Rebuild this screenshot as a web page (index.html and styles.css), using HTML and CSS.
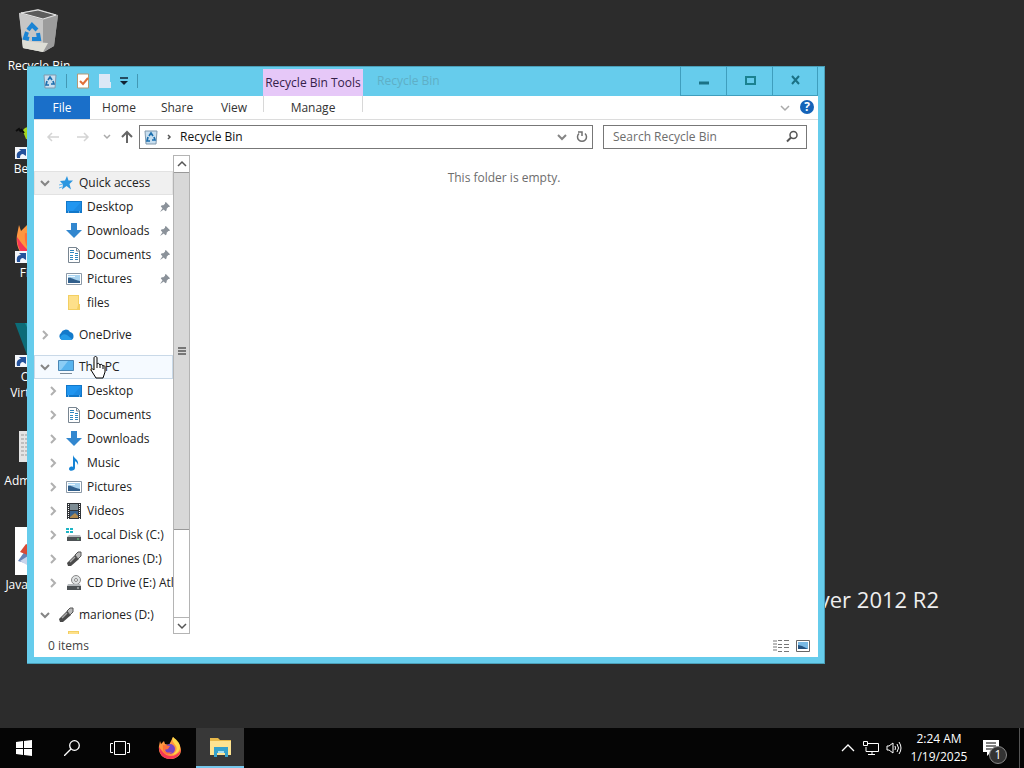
FILE: index.html
```html
<!DOCTYPE html>
<html lang="en">
<head>
  <meta charset="UTF-8">
  <meta name="viewport" content="width=device-width, initial-scale=1.0">
  <title>Recycle Bin</title>
  <link rel="stylesheet" href="styles.css">
</head>
<body>
  <!-- shared icons -->
  <svg class="sprite" aria-hidden="true">
    <symbol id="right" viewBox="0 0 14 14"><path d="M5 3l4 4-4 4" fill="none" stroke="#b0b0b0" stroke-width="2"/></symbol>
    <symbol id="down" viewBox="0 0 14 14"><path d="M3 5l4 4 4-4" fill="none" stroke="#858585" stroke-width="2"/></symbol>
    <symbol id="thin-down" viewBox="0 0 14 14"><path d="M3 5l4 4 4-4" fill="none" stroke="currentColor" stroke-width="1.5"/></symbol>
    <symbol id="thin-up" viewBox="0 0 14 14"><path d="M3 9l4-4 4 4" fill="none" stroke="currentColor" stroke-width="1.5"/></symbol>
    <symbol id="bin" viewBox="0 0 16 16">
      <path d="M2 2h12l-1 13H3z" fill="#c8dff0" stroke="#8199ad"/>
      <path d="M6 7l2-3 2 3M11 8l1 3H9M7 12H4l1-4" fill="none" stroke="#1c6fae" stroke-width="1.7"/>
    </symbol>
    <symbol id="star" viewBox="0 0 16 16"><path d="M9 1l1.500 4.500H15L11.500 9l1.500 5.500L8.500 11 4 14.500l1-5L2 6l5-.5z" fill="#2b96e0"/><path d="M1 10l4-1M1 13l3-1" stroke="#6bb8ee"/></symbol>
    <symbol id="desktop" viewBox="0 0 16 16"><path d="M0 2h16v12H0z" fill="#1177c9"/><path d="M1 3h14v9H1z" fill="#2196f0"/><path d="M15 3v9H7z" fill="#1c8be4"/><path d="M2 13h1M13 13h1" stroke="#cfe7fa"/></symbol>
    <symbol id="download" viewBox="0 0 16 16"><path d="M5 0h6v7h5l-8 8-8-8h5z" fill="#3287cf"/></symbol>
    <symbol id="document" viewBox="0 0 16 16"><path d="M2.500.5h8l3 3v12h-11z" fill="#fff" stroke="#788591"/><path d="M4 3.500h4M4 5.500h4M9 6.500h3M4 8.500h3M9 8.500h3M4 10.500h3M9 10.500h3M4 12.500h3M9 12.500h3" stroke="#2f86c0"/><path d="M10.500 1v3h3" fill="none" stroke="#788591"/></symbol>
    <symbol id="picture" viewBox="0 0 16 16"><path d="M.5 2.500h15v11H.5z" fill="#fff" stroke="#8b99a7"/><path d="M2 4h12v8H2z" fill="#a9d3ef"/><path d="M2 7c4-1 5 2 12 3v2H2z" fill="#315f8c"/><path d="M2 5h7v1H2z" fill="#eef8ff"/></symbol>
    <symbol id="folder" viewBox="0 0 16 16"><path d="M2 0h11v9h1v6H2z" fill="#f3cf62"/><path d="M3 1h9v9l-1 4H3z" fill="#fde08a"/></symbol>
    <symbol id="cloud" viewBox="0 0 16 16"><path d="M4 13a4 4 0 0 1-1-7 5 5 0 0 1 9-1 4.200 4.200 0 0 1 1 8z" fill="#127acb"/><path d="M2 11c2-5 5-4 7-3l5 4-1 1H4z" fill="#249be8"/></symbol>
    <symbol id="pc" viewBox="0 0 16 16"><path d="M.5 1.500h15v10H.5z" fill="#58b4ee" stroke="#4a86b4"/><path d="M1 2h9L3 11H1z" fill="#8bcdf5"/><path d="M2 14h12v1H2z" fill="#7c8c99"/></symbol>
    <symbol id="music" viewBox="0 0 16 16"><path d="M7 0c1 4 6 4 5 10-1-3-2-3-3-4v7c0 3-6 4-6 1 0-2 2-3 4-2z" fill="#1684d6"/></symbol>
    <symbol id="video" viewBox="0 0 16 16"><path d="M1 0h14v16H1z" fill="#303337"/><path d="M4 1h8v6H4z" fill="#7d8c94"/><path d="M4 8h8v7H4z" fill="#39638e"/><path d="M4 14l5-4 3 3v2H4z" fill="#b28a4d"/><path d="M2.500 1v15M13.500 1v15" stroke="#fff" stroke-dasharray="1 1"/></symbol>
    <symbol id="disk" viewBox="0 0 16 16"><path d="M0 1h3v2H0zM4 1h3v2H4zM0 4h3v2H0zM4 4h3v2H4z" fill="#1db5c5"/><path d="M3 8h11l1 2H1z" fill="#b5b9bc"/><path d="M1 10h14v4H1z" fill="#4d5255"/><path d="M11 12h2" stroke="#72e286"/></symbol>
    <symbol id="usb" viewBox="0 0 16 16"><path d="M1 12L9 4l4 4-8 7H2z" fill="#4a4a4a"/><path d="M9 4l3-3h3v4l-3 3z" fill="#b9b9b9" stroke="#555"/><path d="M4 11l5-5" stroke="#aaa" stroke-width="1.500"/></symbol>
    <symbol id="cd" viewBox="0 0 16 16"><circle cx="10" cy="5" r="4.500" fill="#e0e3e4" stroke="#888"/><circle cx="10" cy="5" r="1.500" fill="#fff" stroke="#888"/><path d="M2 9h12l1 2H1z" fill="#b5b9bc"/><path d="M1 11h14v4H1z" fill="#4d5255"/><path d="M11 13h2" stroke="#ddd"/></symbol>
    <symbol id="pin" viewBox="0 0 12 12"><path d="M7 0l5 5-1 1h-1L8 8v2L6.500 11 4.500 9 0 12l3-4.500-2-2L2 4h2l2-2V1z" fill="#8b929a"/></symbol>
    <symbol id="glass" viewBox="0 0 16 16"><circle cx="9.500" cy="6" r="3.500" fill="none" stroke="currentColor" stroke-width="1.500"/><path d="M7 8.500l-4 4" stroke="currentColor" stroke-width="2"/></symbol>
    <symbol id="fox" viewBox="0 0 24 24">
      <path d="M2 5l1 3 3-3 1 3 4 1 4-8 3 4 3 3c5 8 0 15-9 15C4 23 0 17 1 10z" fill="#ff9640"/>
      <path d="M1 11c0 7 4 12 11 12 6 0 10-4 11-9-3 4-6 6-10 6C7 20 4 15 1 11z" fill="#f63656"/>
      <path d="M15 1c-2 3 1 6 3 9 2 4-1 7-4 9 6-1 8-5 8-8 0-4-3-7-7-10z" fill="#ffd84b"/>
      <circle cx="12" cy="13" r="5" fill="#7544c6"/><path d="M5 9l7 1-2 3-4 1c2 3 5 3 8 2-4 5-10 2-9-7z" fill="#ff7139"/>
    </symbol>
    <symbol id="shortcut" viewBox="0 0 12 12"><path d="M0 0h12v12H0z" fill="#f4f6fa"/><path d="M2 11c-1-5 1-7 4-7L4 2h7v7L8 7c-2 0-3 1-3 4z" fill="#24529b"/></symbol>
  </svg>

  <main class="desktop">
    <a class="shortcut recycle" href="#">
      <svg class="big" viewBox="0 0 48 48">
        <path d="M4 5l19-4 20 6-4 31-10 6-21-4z" fill="#a8a8a8"/>
        <path d="M4 5l24 7v32L8 40z" fill="#c6c6c6"/><path d="M28 12l15-5-4 31-11 6z" fill="#9c9c9c"/>
        <path d="M6 5l17-3 18 5-13 4z" fill="#5c5c5c" stroke="#e6e6e6"/><path d="M7 32l12 2 14 1-5 9-20-4z" fill="#deded6"/>
        <path d="M13 22l4-5 5 5M23 25l1 6h-7M14 31l-4-1 2-6" fill="none" stroke="#1b84d4" stroke-width="4"/>
      </svg>
      <span>Recycle Bin</span>
    </a>
    <a class="shortcut bee" href="#">
      <svg class="big" viewBox="0 0 48 48"><path d="M7 20l3-3 5-2v14l-4-1-2-5z" fill="#a5d51f"/><path d="M1 20l3-2 2 3M6 18l3 4" fill="none" stroke="#0c0c0c" stroke-width="2"/></svg>
      <svg class="arrow"><use href="#shortcut"/></svg>
      <span>BeeWare</span>
    </a>
    <a class="shortcut firefox" href="#">
      <svg class="big"><use href="#fox"/></svg>
      <svg class="arrow"><use href="#shortcut"/></svg>
      <span>Firefox</span>
    </a>
    <a class="shortcut virtual" href="#">
      <svg class="big" viewBox="0 0 48 48"><path d="M0 4h14l10 30-12 2z" fill="#0c6c78"/><path d="M10 4h14v30z" fill="#15929b"/></svg>
      <svg class="arrow"><use href="#shortcut"/></svg>
      <span>Oracle<br>VirtualBox</span>
    </a>
    <a class="shortcut admin" href="#">
      <svg class="big" viewBox="0 0 48 48"><path d="M4 8h40v31H4z" fill="#e4e4e4"/><path d="M6 12h36M6 16h36M6 20h36M6 24h36M6 28h36M6 32h36" stroke="#999" stroke-dasharray="3 1"/></svg>
      <span>Admin Tools</span>
    </a>
    <a class="shortcut java" href="#">
      <svg class="big" viewBox="0 0 48 48"><path d="M0 0h48v48H0z" fill="#fff"/><path d="M3 34l7-10 14 4v12z" fill="#6482b8"/><path d="M5 25l6-8 9 4-2 9z" fill="#d94a35"/><path d="M5 34l8-5 5 5-6 4z" fill="#c9d5ec"/></svg>
      <span>Java Control</span>
    </a>
    <p class="wordmark">Windows Server 2012 R2</p>

    <section class="window">
      <header class="titlebar">
        <div class="quick">
          <svg class="ico"><use href="#bin"/></svg>
          <i class="sep"></i>
          <button aria-label="Properties"><svg class="ico" viewBox="0 0 16 16"><path d="M2.500 1h11v14h-11z" fill="#fff" stroke="#b49a76"/><path d="M5 8l3 3 5-6" fill="none" stroke="#e0703a" stroke-width="2"/></svg></button>
          <button aria-label="New folder"><svg class="ico" viewBox="0 0 16 16"><path d="M2 1h11v8h1v6H2z" fill="#dce8f6"/></svg></button>
          <button aria-label="Customize"><svg class="mini" viewBox="0 0 10 10"><path d="M1 2h8" stroke="#123" stroke-width="1.500"/><path d="M1 5h8L5 9z" fill="#123"/></svg></button>
          <i class="sep"></i>
        </div>
        <div class="context">Recycle Bin Tools</div>
        <h1>Recycle Bin</h1>
        <div class="controls">
          <button aria-label="Minimize"><svg viewBox="0 0 14 14"><path d="M2 9h10" stroke="#1b7286" stroke-width="3"/></svg></button>
          <button aria-label="Maximize"><svg viewBox="0 0 14 14"><path d="M3 3h9v7H3z" fill="none" stroke="#1b8290" stroke-width="2"/></svg></button>
          <button aria-label="Close"><svg viewBox="0 0 14 14"><path d="M4 2l7 8M11 2l-7 8" stroke="#1b7286" stroke-width="2"/></svg></button>
        </div>
      </header>

      <nav class="ribbon">
        <button class="file">File</button>
        <button>Home</button>
        <button>Share</button>
        <button class="view">View</button>
        <button class="manage">Manage</button>
        <span class="grow"></span>
        <button class="expand" aria-label="Expand ribbon"><svg><use href="#thin-down"/></svg></button>
        <button class="help" aria-label="Help">?</button>
      </nav>

      <div class="address">
        <button class="nav" aria-label="Back"><svg viewBox="0 0 14 14"><path d="M13 7H2M6 3L2 7l4 4" fill="none" stroke="#d4d4d4" stroke-width="1.500"/></svg></button>
        <button class="nav" aria-label="Forward"><svg viewBox="0 0 14 14"><path d="M1 7h11M8 3l4 4-4 4" fill="none" stroke="#d4d4d4" stroke-width="1.500"/></svg></button>
        <button class="recent" aria-label="Recent"><svg viewBox="0 0 10 10"><path d="M2 3l3 3 3-3" fill="none" stroke="#aaa" stroke-width="1.500"/></svg></button>
        <button class="nav" aria-label="Up"><svg viewBox="0 0 14 14"><path d="M7 13V2M2 7l5-5 5 5" fill="none" stroke="#666" stroke-width="2"/></svg></button>
        <div class="path">
          <svg class="ico"><use href="#bin"/></svg>
          <svg class="crumb" viewBox="0 0 10 10"><path d="M4 3l2 2-2 2" fill="none" stroke="#555" stroke-width="1.500"/></svg>
          <button class="here">Recycle Bin</button>
          <button aria-label="Previous locations"><svg><use href="#down"/></svg></button>
          <button aria-label="Refresh"><svg viewBox="0 0 14 14"><path d="M10 3.500a4.500 4.500 0 1 1-6 0M3 2h4v4" fill="none" stroke="#707070" stroke-width="1.500"/></svg></button>
        </div>
        <label class="search">
          <input type="text" placeholder="Search Recycle Bin" aria-label="Search Recycle Bin">
          <svg class="ico"><use href="#glass"/></svg>
        </label>
      </div>

      <div class="content">
        <ul class="tree">
          <li class="row selected"><svg class="tw"><use href="#down"/></svg><svg class="ico"><use href="#star"/></svg><a href="#">Quick access</a></li>
          <li class="row sub"><i class="tw"></i><svg class="ico"><use href="#desktop"/></svg><a href="#">Desktop</a><svg class="pin"><use href="#pin"/></svg></li>
          <li class="row sub"><i class="tw"></i><svg class="ico"><use href="#download"/></svg><a href="#">Downloads</a><svg class="pin"><use href="#pin"/></svg></li>
          <li class="row sub"><i class="tw"></i><svg class="ico"><use href="#document"/></svg><a href="#">Documents</a><svg class="pin"><use href="#pin"/></svg></li>
          <li class="row sub"><i class="tw"></i><svg class="ico"><use href="#picture"/></svg><a href="#">Pictures</a><svg class="pin"><use href="#pin"/></svg></li>
          <li class="row sub"><i class="tw"></i><svg class="ico"><use href="#folder"/></svg><a href="#">files</a></li>
          <li class="row group"><svg class="tw"><use href="#right"/></svg><svg class="ico"><use href="#cloud"/></svg><a href="#">OneDrive</a></li>
          <li class="row group hover"><svg class="tw"><use href="#down"/></svg><svg class="ico"><use href="#pc"/></svg><a href="#">This PC</a>
            <svg class="cursor" viewBox="0 0 16 24"><path d="M4 14V2c0-2 3-2 3 0v6c1-1 2-1 3 1 1-1 2-1 3 1 1-1 2 0 2 1v5l-2 6H6l-5-8c0-2 2-1 3 0zM7 8v4M10 9v3M13 10v3" fill="#fff" stroke="#000"/></svg>
          </li>
          <li class="row sub"><svg class="tw"><use href="#right"/></svg><svg class="ico"><use href="#desktop"/></svg><a href="#">Desktop</a></li>
          <li class="row sub"><svg class="tw"><use href="#right"/></svg><svg class="ico"><use href="#document"/></svg><a href="#">Documents</a></li>
          <li class="row sub"><svg class="tw"><use href="#right"/></svg><svg class="ico"><use href="#download"/></svg><a href="#">Downloads</a></li>
          <li class="row sub"><svg class="tw"><use href="#right"/></svg><svg class="ico"><use href="#music"/></svg><a href="#">Music</a></li>
          <li class="row sub"><svg class="tw"><use href="#right"/></svg><svg class="ico"><use href="#picture"/></svg><a href="#">Pictures</a></li>
          <li class="row sub"><svg class="tw"><use href="#right"/></svg><svg class="ico"><use href="#video"/></svg><a href="#">Videos</a></li>
          <li class="row sub"><svg class="tw"><use href="#right"/></svg><svg class="ico"><use href="#disk"/></svg><a href="#">Local Disk (C:)</a></li>
          <li class="row sub"><svg class="tw"><use href="#right"/></svg><svg class="ico"><use href="#usb"/></svg><a href="#">mariones (D:)</a></li>
          <li class="row sub"><svg class="tw"><use href="#right"/></svg><svg class="ico"><use href="#cd"/></svg><a href="#">CD Drive (E:) Atla</a></li>
          <li class="row group"><svg class="tw"><use href="#down"/></svg><svg class="ico"><use href="#usb"/></svg><a href="#">mariones (D:)</a></li>
          <li class="row sub"><i class="tw"></i><svg class="ico"><use href="#folder"/></svg></li>
        </ul>
        <div class="scrollbar">
          <button aria-label="Scroll up"><svg><use href="#thin-up"/></svg></button>
          <div class="thumb"><i class="grip"></i></div>
          <span class="grow"></span>
          <button aria-label="Scroll down"><svg><use href="#thin-down"/></svg></button>
        </div>
        <p class="empty">This folder is empty.</p>
      </div>

      <footer class="status">
        <span>0 items</span>
        <span class="grow"></span>
        <button aria-label="Details"><svg class="ico" viewBox="0 0 16 16"><path d="M1 2v12M3 2v12" stroke="#777" stroke-dasharray="2 1"/><path d="M5 2.500h4M11 2.500h5M5 6.500h4M11 6.500h5M5 9.500h4M11 9.500h5M5 13.500h4M11 13.500h5" stroke="#777"/></svg></button>
        <button aria-label="Large icons"><svg class="ico" viewBox="0 0 16 16"><path d="M1.500 2.500h13v11h-13z" fill="#fff" stroke="#666"/><path d="M3 4h10v7H3z" fill="#79b9e4"/><path d="M3 7l4 1 6 3H3z" fill="#235280"/></svg></button>
      </footer>
    </section>
  </main>

  <footer class="taskbar">
    <button aria-label="Start"><svg viewBox="0 0 16 16"><path d="M0 2l7-1v7H0zM8 1l8-1v8H8zM0 9h7v6l-7-1zM8 9h8v7l-8-1z" fill="#fff"/></svg></button>
    <button aria-label="Search"><svg viewBox="0 0 16 16"><circle cx="10.500" cy="5.500" r="4.800" fill="none" stroke="#fff" stroke-width="1.300"/><path d="M7 9l-7 7" stroke="#fff" stroke-width="1.300"/></svg></button>
    <button aria-label="Task view"><svg class="wide" viewBox="0 0 20 16"><path d="M4.500 1.500h11v13h-11zM3 3.500H.5v9H3M17 3.500h2.500v9H17" fill="none" stroke="#fff"/></svg></button>
    <button class="app" aria-label="Firefox"><svg class="large"><use href="#fox"/></svg></button>
    <button class="active" aria-label="File Explorer"><svg class="large" viewBox="0 0 24 24"><path d="M2 3h8l2 2h11v15H2z" fill="#e8b94a"/><path d="M2 6h21v14H2z" fill="#fde391"/><path d="M6 12h14v10h-3v-4H9v4H6z" fill="#35a1cc"/><path d="M10 16h6v2h-6z" fill="#a5ddf0"/></svg></button>
    <span class="grow"></span>
    <button class="tray" aria-label="Show hidden icons"><svg viewBox="0 0 16 16"><path d="M2 11l6-6 6 6" fill="none" stroke="#fff" stroke-width="1.300"/></svg></button>
    <button class="tray" aria-label="Network"><svg viewBox="0 0 16 16"><path d="M5 3.500h10.500v8H3V7M9 11v3M5 14.500h7M.5 1.500h4v4h-4z" fill="none" stroke="#fff"/></svg></button>
    <button class="tray" aria-label="Volume"><svg viewBox="0 0 16 16"><path d="M1 6h2l4-3v10l-4-3H1zM9 6q1 2 0 4M11 4q3 4 0 8M13 2q4 6 0 12" fill="none" stroke="#fff"/></svg></button>
    <button class="clock">2:24 AM<br>1/19/2025</button>
    <button class="notes" aria-label="Notifications"><svg viewBox="0 0 16 16"><path d="M0 0h16v12H8l-4 4v-4H0z" fill="#fff"/><path d="M3 3h10M3 6h10M3 9h7" stroke="#000"/></svg><b>1</b></button>
  </footer>
</body>
</html>
```
FILE: styles.css
```css
* {
  box-sizing: border-box;
}
body {
  margin: 0;
  height: 100vh;
  display: flex;
  flex-direction: column;
  overflow: hidden;
  background: #2c2c2c;
  font-family: "Open Sans", "Noto Sans", sans-serif;
  font-size: 12px;
  line-height: 16px;
  color: #222;
}
button {
  display: flex;
  align-items: center;
  justify-content: center;
  margin: 0;
  padding: 0;
  border: none;
  background: none;
  font: inherit;
  color: inherit;
}
a {
  color: inherit;
  text-decoration: none;
}
svg {
  width: 14px;
  height: 14px;
  flex: none;
}
.sprite {
  position: absolute;
  width: 0;
  height: 0;
}
.ico {
  width: 16px;
  height: 16px;
}
.grow {
  flex: 1;
}

/* desktop */
.desktop {
  flex: 1;
  position: relative;
}
.shortcut {
  position: absolute;
  left: 0;
  width: 78px;
  color: #fff;
  text-align: center;
  white-space: nowrap;
}
.shortcut span {
  display: block;
  margin-top: 2px;
}
.big {
  display: block;
  width: 48px;
  height: 48px;
  margin: 0 auto;
}
.arrow {
  position: absolute;
  left: 15px;
  top: 36px;
  width: 12px;
  height: 12px;
}
.recycle { top: 8px; }
.bee { top: 111px; }
.firefox { top: 215px; }
.virtual { top: 319px; }
.admin { top: 423px; }
.java { top: 527px; }
.wordmark {
  position: absolute;
  right: 85px;
  bottom: 113px;
  margin: 0;
  font-size: 22px;
  line-height: 32px;
  color: #eee;
}

/* window */
.window {
  position: absolute;
  left: 27px;
  top: 66px;
  right: 199px;
  bottom: 64px;
  display: flex;
  flex-direction: column;
  padding: 0 7px 7px;
  background: #66ccec;
  box-shadow: inset 0 1px #4a9fb8, inset -1px -1px #4a9fb8;
}
.titlebar {
  display: flex;
  height: 30px;
}
.quick {
  display: flex;
  align-items: center;
  gap: 6px;
  width: 229px;
  padding-left: 8px;
}
.mini {
  width: 10px;
  height: 10px;
}
.sep {
  width: 1px;
  height: 14px;
  margin: 0 2px;
  background: #4398b4;
}
.context {
  width: 100px;
  margin-top: 3px;
  padding-top: 6px;
  background: #e6c8f8;
  color: #35204a;
  text-align: center;
  white-space: nowrap;
}
.titlebar h1 {
  flex: 1;
  margin: 0;
  padding: 7px 14px;
  font-size: 12px;
  font-weight: normal;
  color: #5fafc6;
}
.controls {
  display: flex;
}
.controls button {
  width: 46px;
  border-left: 1px solid #3f9ebd;
  border-bottom: 1px solid #3f9ebd;
}
.controls button:last-child {
  border-right: 1px solid #3f9ebd;
}
.ribbon {
  display: flex;
  height: 24px;
  padding-right: 4px;
  background: #fff;
  border-bottom: 1px solid #dcdcdc;
}
.ribbon button {
  width: 58px;
  color: #333;
}
.ribbon .file {
  width: 56px;
  background: #1a6fc9;
  color: #fff;
}
.ribbon .view {
  width: 56px;
}
.ribbon .manage {
  width: 100px;
  height: 16px;
  margin-left: 1px;
  padding-top: 8px;
  border: solid #d8d8d8;
  border-width: 0 1px;
}
.ribbon .expand {
  width: 18px;
  margin-right: 6px;
  color: #aaa;
}
.ribbon .help {
  width: 14px;
  height: 14px;
  margin-top: 4px;
  border-radius: 50%;
  background: #1463b8;
  color: #fff;
  font-weight: bold;
}
.address {
  display: flex;
  align-items: center;
  height: 33px;
  padding: 0 11px 0 12px;
  background: #fff;
}
.nav {
  width: 14px;
  margin-right: 16px;
}
.recent {
  width: 10px;
  margin: 0 8px 0 -4px;
}
.recent svg,
.crumb {
  width: 10px;
  height: 10px;
}
.recent + .nav {
  margin-right: 5px;
}
.path {
  flex: 1;
  display: flex;
  align-items: center;
  gap: 6px;
  height: 24px;
  padding: 0 3px;
  border: 1px solid #777;
}
.path .crumb {
  margin: 0 0 0 -1px;
}
.path .here {
  flex: 1;
  justify-content: flex-start;
  color: #111;
}
.search {
  display: flex;
  align-items: center;
  width: 204px;
  height: 24px;
  margin-left: 10px;
  padding: 0 6px 0 9px;
  border: 1px solid #777;
  color: #555;
}
.search input {
  flex: 1;
  min-width: 0;
  padding: 0;
  border: none;
  outline: none;
  background: none;
  font: inherit;
}
.search input::placeholder {
  color: #6d6d6d;
}

.content {
  flex: 1;
  min-height: 0;
  display: flex;
  padding-top: 2px;
  background: #fff;
}
.tree {
  width: 139px;
  margin: 0;
  padding: 16px 0 0;
  overflow: hidden;
  list-style: none;
}
.row {
  display: flex;
  align-items: center;
  height: 24px;
  padding-left: 4px;
  white-space: nowrap;
}
.row.sub {
  padding-left: 12px;
}
.row.group {
  margin-top: 8px;
}
.row.selected {
  background: #f0f0f0;
  box-shadow: inset 0 0 0 1px #e2e2e2;
}
.row.hover {
  position: relative;
  background: #f5faff;
  box-shadow: inset 0 0 0 1px #c9d9e8;
}
.tw {
  flex: none;
  width: 14px;
  height: 14px;
  margin-right: 6px;
}
.row a {
  margin-left: 5px;
}
.pin {
  width: 10px;
  height: 10px;
  margin: 0 3px 0 auto;
}
.cursor {
  position: absolute;
  left: 56px;
  top: 1px;
  width: 16px;
  height: 24px;
}
.scrollbar {
  display: flex;
  flex-direction: column;
  width: 17px;
  border: 1px solid #b4b4b4;
}
.scrollbar button {
  height: 16px;
  color: #555;
}
.scrollbar button:last-child {
  border-top: 1px solid #b4b4b4;
}
.thumb {
  display: flex;
  align-items: center;
  justify-content: center;
  height: 75%;
  background: #d8d8d8;
  border: solid #999;
  border-width: 1px 0;
}
.grip {
  width: 8px;
  height: 8px;
  background: repeating-linear-gradient(#777 0 2px, #d8d8d8 2px 3px);
}
.empty {
  flex: 1;
  margin: 15px 0 0;
  color: #6d6d6d;
  text-align: center;
}
.status {
  display: flex;
  align-items: center;
  gap: 6px;
  height: 23px;
  padding: 0 7px 0 14px;
  background: #fff;
  color: #444;
}

/* taskbar */
.taskbar {
  display: flex;
  height: 40px;
  background: #050505;
  color: #fff;
}
.taskbar button {
  width: 48px;
}
.taskbar svg {
  width: 16px;
  height: 16px;
}
.taskbar .wide {
  width: 20px;
}
.taskbar .large {
  width: 24px;
  height: 24px;
}
.taskbar .app {
  width: 52px;
}
.taskbar .active {
  background: #383838;
  border-bottom: 2px solid #76c7ec;
}
.taskbar .tray {
  width: 23px;
}
.taskbar .clock {
  width: 68px;
  line-height: 18px;
}
.taskbar .notes {
  position: relative;
  width: 47px;
  margin-right: 4px;
  padding-right: 10px;
  border-right: 1px solid #555;
}
.notes b {
  position: absolute;
  left: 16px;
  top: 18px;
  width: 18px;
  height: 18px;
  border: 1px solid #888;
  border-radius: 50%;
  background: #333;
  font-size: 12px;
  font-weight: normal;
  line-height: 16px;
}
```
